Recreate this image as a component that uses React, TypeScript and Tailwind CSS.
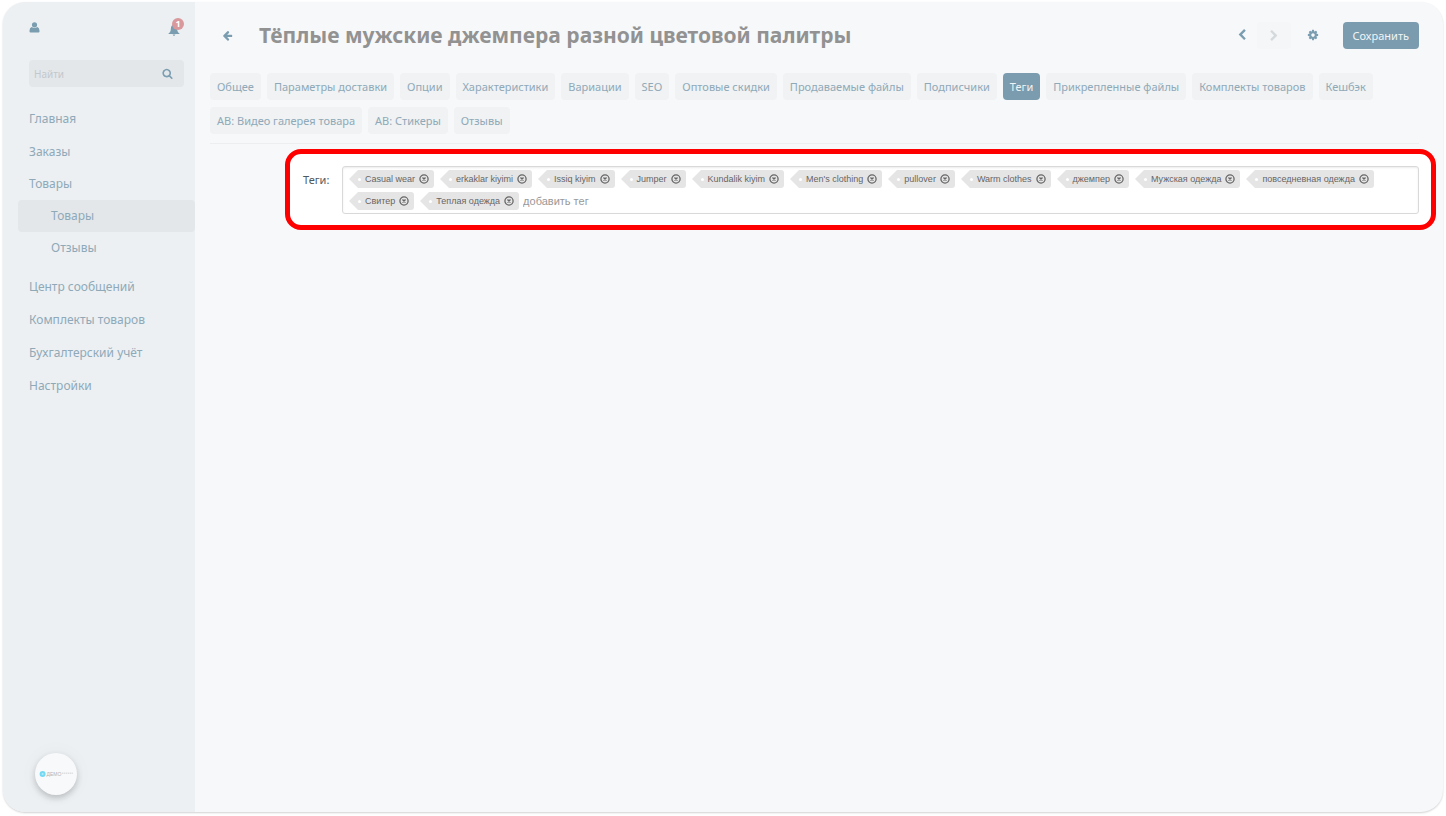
import React from 'react';

const CHEVRON_LEFT =
  'M1427 301l-531 531 531 531q19 19 19 45t-19 45l-166 166q-19 19-45 19t-45-19l-742-742q-19-19-19-45t19-45l742-742q19-19 45-19t45 19l166 166q19 19 19 45t-19 45z';
const ARROW_LEFT =
  'M1664 896v128q0 53-32.5 90.5t-84.5 37.5h-704l293 294q38 36 38 90t-38 90l-75 76q-37 37-90 37-52 0-91-37l-651-652q-37-37-37-90 0-52 37-91l651-650q38-38 91-38 52 0 90 38l75 74q38 38 38 91t-38 91l-293 293h704q52 0 84.5 37.5t32.5 90.5z';
const SEARCH =
  'M1216 832q0-185-131.5-316.5t-316.5-131.5-316.5 131.5-131.5 316.5 131.5 316.5 316.5 131.5 316.5-131.5 131.5-316.5zm512 832q0 52-38 90t-90 38q-54 0-90-38l-343-342q-179 124-399 124-143 0-273.5-55.5t-225-150-150-225-55.5-273.5 55.5-273.5 150-225 225-150 273.5-55.5 273.5 55.5 225 150 150 225 55.5 273.5q0 220-124 399l343 343q37 37 37 90z';
const COG =
  'M1152 896q0-106-75-181t-181-75-181 75-75 181 75 181 181 75 181-75 75-181zm512-109v222q0 12-8 23t-20 13l-185 28q-19 54-39 91 35 50 107 138 10 12 10 25t-9 23q-27 37-99 108t-94 71q-12 0-26-9l-138-108q-44 23-91 38-16 136-29 186-7 28-36 28h-222q-14 0-24.5-8.5t-11.5-21.5l-28-184q-49-16-90-37l-141 107q-10 9-25 9-14 0-25-11-126-114-165-168-7-10-7-23 0-12 8-23 15-21 51-66.5t54-70.5q-27-50-41-99l-183-27q-13-2-21-12.5t-8-23.5v-222q0-12 8-23t19-13l186-28q14-46 39-92-40-57-107-138-10-12-10-24 0-10 9-23 26-36 98.5-107.5t94.5-71.5q13 0 26 10l138 107q44-23 91-38 16-136 29-186 7-28 36-28h222q14 0 24.5 8.5t11.5 21.5l28 184q49 16 90 37l142-107q9-9 24-9 13 0 25 10 129 119 165 170 7 8 7 22 0 12-8 23-15 21-51 66.5t-54 70.5q26 50 41 98l183 28q13 2 21 12.5t8 23.5z';

function Glyph({ d, className }: { d: string; className: string }) {
  return (
    <svg viewBox="0 0 1792 1792" fill="currentColor" className={className} aria-hidden="true">
      <path d={d} />
    </svg>
  );
}

const TABS = [
  'Общее',
  'Параметры доставки',
  'Опции',
  'Характеристики',
  'Вариации',
  'SEO',
  'Оптовые скидки',
  'Продаваемые файлы',
  'Подписчики',
  'Теги',
  'Прикрепленные файлы',
  'Комплекты товаров',
  'Кешбэк',
  'АВ: Видео галерея товара',
  'АВ: Стикеры',
  'Отзывы',
];

const TAGS = [
  'Casual wear',
  'erkaklar kiyimi',
  'Issiq kiyim',
  'Jumper',
  'Kundalik kiyim',
  "Men's clothing",
  'pullover',
  'Warm clothes',
  'джемпер',
  'Мужская одежда',
  'повседневная одежда',
  'Свитер',
  'Теплая одежда',
];

function Tag({ label }: { label: string }) {
  return (
    <li className="flex h-[18px] items-center">
      <svg viewBox="0 0 9 18" className="h-[18px] w-[9px] shrink-0" aria-hidden="true">
        <path d="M9 0 L0 9 L9 18 Z" fill="#e5e5e5" />
      </svg>
      <span className="flex h-[18px] items-center rounded-r-[3px] bg-[#e5e5e5] pr-[5px] whitespace-nowrap">
        <span className="mr-1 size-[3px] rounded-full bg-white" />
        <span className="text-[9px] leading-[18px] text-[#666]">{label}</span>
        <button type="button" aria-label={`Удалить ${label}`} className="ml-1 text-[#666]">
          <svg viewBox="0 0 10 10" className="block size-[10px]" fill="none" stroke="currentColor" aria-hidden="true">
            <circle cx="5" cy="5" r="4.1" strokeWidth="1.3" />
            <path d="M3.5 3.5 L6.5 6.5 M6.5 3.5 L3.5 6.5" strokeWidth="1.4" />
          </svg>
        </button>
      </span>
    </li>
  );
}

function MenuLink({ children }: { children: string }) {
  return (
    <li>
      <a href="#" className="block px-[11px] text-[12px] leading-[33px]">
        {children}
      </a>
    </li>
  );
}

function Sidebar() {
  return (
    <aside className="flex w-[192px] shrink-0 flex-col bg-[#ecf0f3] text-[#8fa9b8]">
      <div className="flex items-center justify-between pt-4 pr-[11px] pl-[26px]">
        <button type="button" aria-label="Профиль" className="text-[#7a9db0]">
          <svg viewBox="0 0 10 11" fill="currentColor" className="block h-[11px] w-[11px]" aria-hidden="true">
            <circle cx="5" cy="2.8" r="2.6" />
            <path d="M2.2 5 Q5 7 7.8 5 Q10 5.6 10 8.8 V9.6 Q10 10.6 9 10.6 H1 Q0 10.6 0 9.6 V8.8 Q0 5.6 2.2 5Z" />
          </svg>
        </button>
        <button type="button" aria-label="Уведомления" className="relative h-[18px] w-4 text-[#7a9db0]">
          <svg viewBox="0 0 12 12" fill="currentColor" className="mt-[5px] block size-3" aria-hidden="true">
            <path d="M6 0.6 C3.6 1 2.9 2.9 2.8 5.2 C2.7 7.4 2 8.5 0.5 9.6 V10 H11.5 V9.6 C10 8.5 9.3 7.4 9.2 5.2 C9.1 2.9 8.4 1 6 0.6Z M4.6 10.4 H7.4 Q7.2 11.8 6 11.8 Q4.8 11.8 4.6 10.4Z" />
          </svg>
          <span className="absolute top-0 left-1 flex size-3 items-center justify-center rounded-full bg-[#d8989c] text-[9px] leading-3 font-bold text-white">
            1
          </span>
        </button>
      </div>

      <form className="mt-6 mr-[11px] ml-[26px] flex h-[27px] items-center rounded bg-[#e3e7ea] pr-[11px] pl-[5px]">
        <input
          type="text"
          aria-label="Найти"
          placeholder="Найти"
          className="w-full min-w-0 bg-transparent text-[10px] leading-4 outline-none placeholder:text-[#c3c8cc]"
        />
        <button type="button" aria-label="Поиск" className="text-[#7a9db0]">
          <Glyph d={SEARCH} className="block size-[11px]" />
        </button>
      </form>

      <nav className="mt-[15px] pl-[15px]">
        <ul className="flex flex-col">
          <MenuLink>Главная</MenuLink>
          <MenuLink>Заказы</MenuLink>
          <li>
            <a href="#" className="block px-[11px] text-[12px] leading-8">
              Товары
            </a>
            <ul className="mb-1.5">
              <li>
                <a href="#" className="block rounded bg-[#e3e7ea] px-[33px] text-[12px] leading-8">
                  Товары
                </a>
              </li>
              <li>
                <a href="#" className="block px-[33px] text-[12px] leading-8">
                  Отзывы
                </a>
              </li>
            </ul>
          </li>
          <MenuLink>Центр сообщений</MenuLink>
          <MenuLink>Комплекты товаров</MenuLink>
          <MenuLink>Бухгалтерский учёт</MenuLink>
          <MenuLink>Настройки</MenuLink>
        </ul>
      </nav>

      <a
        href="#"
        aria-label="Демо магазин"
        className="mt-auto mb-[17px] ml-8 flex size-[42px] items-center justify-center rounded-full bg-[#f8f9fb] shadow-[0_3px_6px_rgba(0,0,0,0.2),0_0_20px_rgba(0,0,0,0.04)]"
      >
        <svg viewBox="0 0 34 8" className="h-2 w-[34px]" aria-hidden="true">
          <circle cx="3.6" cy="4" r="3" fill="#76d9f3" />
          <circle cx="3.6" cy="4" r="1" fill="#b5eaf8" />
          <text x="7.5" y="6" fontSize="5" fill="#b2b4b6" fontFamily="Liberation Sans">
            ДЕМО
          </text>
          <path d="M23 3.2 H34" stroke="#dcdee0" strokeWidth="1.4" strokeDasharray="1.4 0.5" />
        </svg>
      </a>
    </aside>
  );
}

export default function App() {
  return (
    <div className="flex min-h-screen bg-white px-[3px] pt-0.5 pb-1 font-['Noto_Sans','Open_Sans',sans-serif]">
      <div className="flex flex-1 overflow-hidden rounded-[22px] bg-[#f7f8fa] shadow-[0_1px_2px_rgba(0,0,0,0.18)]">
        <Sidebar />
        <main className="min-w-0 flex-1 pr-[7px] pl-[15px]">
          <header className="flex items-center pt-[18px] pr-[17px]">
            <a href="#" aria-label="Назад" className="ml-3 text-[#7a9db0]">
              <Glyph d={ARROW_LEFT} className="block size-[11px]" />
            </a>
            <h1 className="ml-[26px] flex-1 text-[21px] leading-[30px] font-bold text-[#929292]">
              Тёплые мужские джемпера разной цветовой палитры
            </h1>
            <button type="button" aria-label="Предыдущий" className="text-[#7a9db0]">
              <Glyph d={CHEVRON_LEFT} className="block size-3" />
            </button>
            <button
              type="button"
              disabled
              aria-label="Следующий"
              className="ml-[9px] flex h-[27px] w-[34px] items-center justify-center rounded bg-[#f5f6f7] text-[#d6d9db]"
            >
              <Glyph d={CHEVRON_LEFT} className="block size-3 rotate-180" />
            </button>
            <button type="button" aria-label="Настройки" className="ml-4 text-[#7a9db0]">
              <Glyph d={COG} className="block size-3" />
            </button>
            <button
              type="button"
              className="ml-6 h-[27px] rounded bg-[#7a9cae] px-[10px] text-[11px] leading-[27px] text-[#f0f4f6]"
            >
              Сохранить
            </button>
          </header>

          <nav className="mt-[23px] mr-[17px] flex flex-wrap gap-x-1.5 gap-y-[7px] border-b border-[#eceef0] pb-[9px]">
            {TABS.map((tab) => (
              <a
                key={tab}
                href="#"
                className={
                  tab === 'Теги'
                    ? 'rounded bg-[#7a9cae] px-[7px] text-[11px] leading-[27px] text-[#f0f4f6]'
                    : 'rounded bg-[#f0f2f3] px-[7px] text-[11px] leading-[27px] text-[#8fa9b8]'
                }
              >
                {tab}
              </a>
            ))}
          </nav>

          <section className="mt-[5px] ml-[75px] flex items-start rounded-[16px] border-5 border-[#ff0000] bg-white pt-3 pr-3 pb-[11px] pl-[13px]">
            <label htmlFor="new-tag" className="w-[39px] shrink-0 pt-1.5 text-[11px] leading-4 text-[#4f5a60]">
              Теги:
            </label>
            <ul className="flex min-w-0 flex-1 flex-wrap gap-x-1.5 gap-y-1 rounded-[3px] border border-[#d9d9d9] px-1.5 py-[3px] font-['Liberation_Sans',Arial,sans-serif] shadow-[inset_0_1px_2px_rgba(0,0,0,0.08)]">
              {TAGS.map((tag) => (
                <Tag key={tag} label={tag} />
              ))}
              <li className="-ml-0.5 flex h-[18px] items-center">
                <input
                  id="new-tag"
                  type="text"
                  placeholder="добавить тег"
                  className="w-24 bg-transparent text-[11px] leading-4 outline-none placeholder:text-[#999]"
                />
              </li>
            </ul>
          </section>
        </main>
      </div>
    </div>
  );
}
